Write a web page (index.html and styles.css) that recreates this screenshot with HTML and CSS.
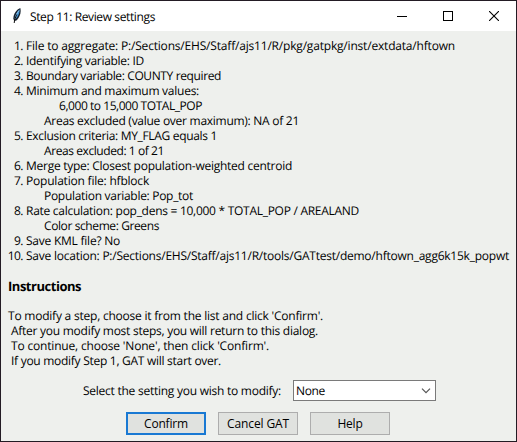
FILE: index.html
```html
<!DOCTYPE html>
<html lang="en">
<head>
<meta charset="utf-8">
<title>Step 11: Review settings</title>
<link rel="stylesheet" href="styles.css">
</head>
<body>
<div class="window">
  <header class="titlebar">
    <svg class="feather" width="10" height="18" viewBox="0 0 10 18">
      <path d="M8.300 1C4.600 2.500 1.500 6.500 1.300 11.500L2.200 14.200L4.800 13.200C7.500 10.500 9.500 5.500 8.300 1Z" fill="#16202c"/>
      <path d="M7.600 2.300C5 4.500 3 8 2.600 11.800L4.300 11.300C6.500 9 8 5.500 7.600 2.300Z" fill="#3f8fd0"/>
      <path d="M7 3.500C5 6 3.700 9 3.100 12" stroke="#a9d6f5" stroke-width=".8" fill="none"/>
      <path d="M4.700 7.500L2.700 12.500L2.200 16" stroke="#111" stroke-width="1" fill="none"/>
    </svg>
    <h1 class="title"><span data-w="125">Step 11: Review settings</span></h1>
    <div class="controls">
      <svg width="10" height="10" viewBox="0 0 10 10"><path d="M0 5.500H10" stroke="#000"/></svg>
      <svg width="10" height="10" viewBox="0 0 10 10"><rect x=".5" y=".5" width="9" height="9" fill="none" stroke="#000"/></svg>
      <svg width="10" height="10" viewBox="0 0 10 10"><path d="M0 0L10 10M10 0L0 10" stroke="#000" stroke-width="1.100"/></svg>
    </div>
  </header>
  <main class="content">
    <div class="settings">
      <div class="row"><b class="num">1.</b><span data-w="429">File to aggregate: P:/Sections/EHS/Staff/ajs11/R/pkg/gatpkg/inst/extdata/hftown</span></div>
      <div class="row"><b class="num">2.</b><span data-w="118">Identifying variable: ID</span></div>
      <div class="row"><b class="num">3.</b><span data-w="195">Boundary variable: COUNTY required</span></div>
      <div class="row"><b class="num">4.</b><span data-w="173">Minimum and maximum values:</span></div>
      <div class="row deep"><span data-w="143">6,000 to 15,000 TOTAL_POP</span></div>
      <div class="row sub"><span data-w="255">Areas excluded (value over maximum): NA of 21</span></div>
      <div class="row"><b class="num">5.</b><span data-w="191">Exclusion criteria: MY_FLAG equals 1</span></div>
      <div class="row sub"><span data-w="120">Areas excluded: 1 of 21</span></div>
      <div class="row"><b class="num">6.</b><span data-w="266">Merge type: Closest population-weighted centroid</span></div>
      <div class="row"><b class="num">7.</b><span data-w="123">Population file: hfblock</span></div>
      <div class="row sub"><span data-w="149">Population variable: Pop_tot</span></div>
      <div class="row"><b class="num">8.</b><span data-w="333">Rate calculation: pop_dens = 10,000 * TOTAL_POP / AREALAND</span></div>
      <div class="row sub"><span data-w="115">Color scheme: Greens</span></div>
      <div class="row"><b class="num">9.</b><span data-w="94">Save KML file? No</span></div>
      <div class="row"><b class="num">10.</b><span data-w="483">Save location: P:/Sections/EHS/Staff/ajs11/R/tools/GATtest/demo/hftown_agg6k15k_popwt</span></div>
    </div>
    <h2 class="heading"><span data-w="73">Instructions</span></h2>
    <div class="instructions">
      <div><span data-w="315">To modify a step, choose it from the list and click 'Confirm'.</span></div>
      <div class="indent"><span data-w="307">After you modify most steps, you will return to this dialog.</span></div>
      <div class="indent"><span data-w="258">To continue, choose 'None', then click 'Confirm'.</span></div>
      <div class="indent"><span data-w="210">If you modify Step 1, GAT will start over.</span></div>
    </div>
    <div class="picker">
      <span data-w="198">Select the setting you wish to modify:</span>
      <div class="combo"><span data-w="29">None</span>
        <svg width="10" height="6" viewBox="0 0 10 6"><path d="M1 .7L5 4.700L9 .7" fill="none" stroke="#555" stroke-width="1.200"/></svg>
      </div>
    </div>
    <div class="buttons">
      <button class="btn primary"><span data-w="44">Confirm</span></button>
      <button class="btn"><span data-w="62">Cancel GAT</span></button>
      <button class="btn"><span data-w="25">Help</span></button>
    </div>
  </main>
</div>
<script src="fit.js"></script>
</body>
</html>
```
FILE: fit.js
```js
// Adjust tracking so each label keeps its intended width.
document.querySelectorAll("[data-w]").forEach(function (el) {
  var gap = Number(el.dataset.w) - el.getBoundingClientRect().width;
  el.style.letterSpacing = (gap / el.textContent.length).toFixed(4) + "px";
});
```
FILE: styles.css
```css
* { box-sizing: border-box; }
body {
  margin: 0;
  font: 12px/15px "Open Sans", "Noto Sans", sans-serif;
  color: #000;
  text-rendering: geometricPrecision;
}
.window {
  width: 517px;
  height: 442px;
  border: 1px solid #231b24;
  background: #eef0ed;
  overflow: hidden;
}
[data-w] { white-space: pre; }
.titlebar {
  display: flex;
  align-items: center;
  height: 30px;
  padding: 0 17px 0 11px;
  background: #fff;
}
.feather { margin-right: 8px; }
.title { margin: 0; font-size: 12px; font-weight: 400; }
.controls { display: flex; gap: 36px; margin-left: auto; }
.controls svg { display: block; }
.content { padding: 7px 0 0 7px; }
.row { display: flex; height: 15px; }
.num {
  display: flex;
  justify-content: flex-end;
  width: 15px;
  margin-right: 3px;
  font-weight: 400;
  letter-spacing: -.5px;
}
.sub { padding-left: 36px; }
.deep { padding-left: 51px; }
.heading { margin: 15px 0 14px; font-size: 13px; line-height: 16px; font-weight: 700; }
.instructions { height: 61px; }
.indent { padding-left: 3px; }
.picker { display: flex; align-items: center; gap: 12px; height: 21px; margin: 11px 0 0 75px; }
.combo {
  display: flex;
  align-items: center;
  justify-content: space-between;
  width: 143px;
  height: 21px;
  padding: 0 4px 0 2px;
  border: 1px solid #7a7a7a;
  background: #fff;
}
.buttons { display: flex; gap: 12px; margin: 11px 0 0 118px; }
.btn {
  width: 80px;
  height: 23px;
  padding: 0;
  border: 1px solid #adadad;
  border-radius: 0;
  background: #e0e2df;
  color: #000;
  font: inherit;
}
.primary { border: 2px solid #1979d3; }
```
